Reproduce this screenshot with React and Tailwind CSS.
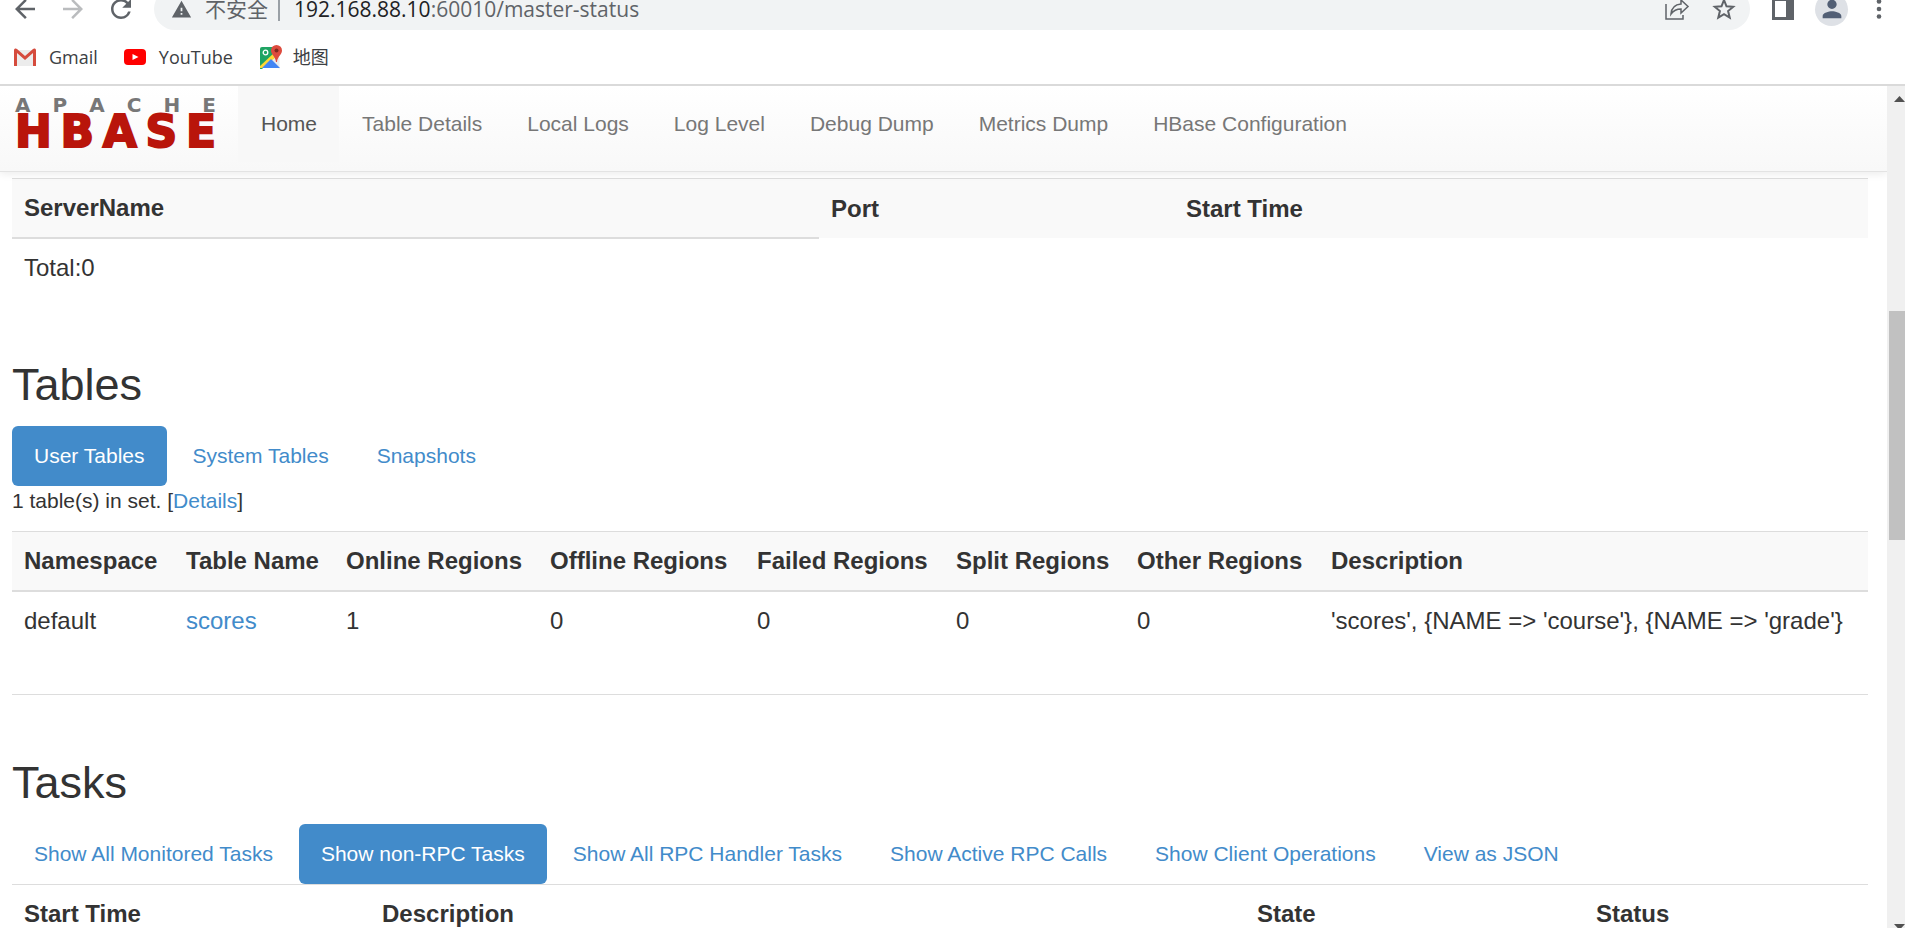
import { MdArrowBack, MdArrowForward, MdPerson, MdRefresh, MdWarning } from "react-icons/md";

const navItems = ["Home", "Table Details", "Local Logs", "Log Level", "Debug Dump", "Metrics Dump", "HBase Configuration"];

const tableColumns = [
  { name: "Namespace", width: "w-[162px]" },
  { name: "Table Name", width: "w-[160px]" },
  { name: "Online Regions", width: "w-[204px]" },
  { name: "Offline Regions", width: "w-[207px]" },
  { name: "Failed Regions", width: "w-[199px]" },
  { name: "Split Regions", width: "w-[181px]" },
  { name: "Other Regions", width: "w-[194px]" },
  { name: "Description", width: "" },
];

const taskTabs = [
  "Show All Monitored Tasks",
  "Show non-RPC Tasks",
  "Show All RPC Handler Tasks",
  "Show Active RPC Calls",
  "Show Client Operations",
  "View as JSON",
];

function BrowserToolbar() {
  return (
    <div className="flex h-[42px] -mt-3 items-center pl-[10px] pr-[15px] text-[#5f6368]">
      <div className="mr-[18px] flex gap-[18px]">
        <button aria-label="Back">
          <MdArrowBack size={30} />
        </button>
        <button aria-label="Forward" disabled className="text-[#babcbe]">
          <MdArrowForward size={30} />
        </button>
        <button aria-label="Reload">
          <MdRefresh size={30} />
        </button>
      </div>

      <div className="flex h-[42px] flex-1 items-center rounded-full bg-[#f1f3f4] pl-[17px] pr-[14px]">
        <MdWarning size={21} className="mr-[13px] shrink-0" />
        <span className="text-[21px] leading-[30px]">不安全</span>
        <span className="mx-[10px] h-6 w-[2px] bg-[#9aa0a6]" />
        <span className="flex-1 pl-1 text-[21px] leading-[30px]">
          <span className="text-[#202124]">192.168.88.10</span>:60010/master-status
        </span>
        <button aria-label="Share this page" className="mr-[22px]">
          <svg width="26" height="26" viewBox="0 0 26 26" fill="none" stroke="currentColor" strokeWidth="1.5">
            <path d="M2 8v15h17v-4" />
            <path d="M7 18c.5-6 4-9.500 10-10V4l7 6.500-7 6.500v-4c-4.500 0-7.500 1.500-10 5z" />
          </svg>
        </button>
        <button aria-label="Bookmark this page">
          <svg width="24" height="24" viewBox="0 0 24 24" fill="none" stroke="currentColor" strokeWidth="2">
            <path d="M12 3l2.500 6.300 6.700.5-5.100 4.300 1.600 6.600L12 17.100l-5.700 3.600 1.600-6.600-5.100-4.300 6.700-.5z" />
          </svg>
        </button>
      </div>

      <button aria-label="Side panel" className="ml-[22px]">
        <svg width="22" height="22" viewBox="0 0 22 22">
          <path fill="currentColor" fillRule="evenodd" d="M0 0h22v22H0zM3 3v16h11V3z" />
        </svg>
      </button>
      <button aria-label="Profile" className="ml-[21px] flex size-[33px] items-center justify-center rounded-full bg-[#dee1e6] text-[#525f75]">
        <MdPerson size={28} />
      </button>
      <button aria-label="Menu" className="ml-[24px]">
        <svg width="18" height="24" viewBox="0 0 18 24" fill="currentColor">
          <circle cx="7" cy="4.500" r="2.300" />
          <circle cx="7" cy="12" r="2.300" />
          <circle cx="7" cy="19.500" r="2.300" />
        </svg>
      </button>
    </div>
  );
}

function BookmarksBar() {
  return (
    <div className="flex h-[54px] items-center pt-px pl-[13px] text-[18px] text-[#3c4043]">
      <a href="#gmail" className="flex items-center">
        <svg width="24" height="22" viewBox="0 0 24 22" className="mr-3">
          <path fill="#ececec" d="M2 3h20v16H2z" />
          <path fill="#d54b3d" d="M1 3c0-1.500 2-2 3-1l8 7 8-7c1-1 3-.5 3 1v16h-3V6l-8 7-8-7v13H1z" />
        </svg>
        Gmail
      </a>
      <a href="#youtube" className="ml-[26px] flex items-center">
        <svg width="22" height="20" viewBox="0 0 22 20" className="mr-[13px]">
          <rect width="22" height="16" y="1" rx="4" fill="#f00" />
          <path fill="#fff" d="M8.500 6l6 3-6 3z" />
        </svg>
        YouTube
      </a>
      <a href="#maps" className="ml-[27px] flex items-center">
        <MapsIcon />
        地图
      </a>
    </div>
  );
}

function MapsIcon() {
  return (
    <svg width="22" height="26" viewBox="0 0 22 26" className="mr-[11px]">
      <path fill="#1fa463" d="M0 4q0-2 2-2h12l4 8L2 24H0z" />
      <path fill="#e8eaed" d="M18 11l1.500 2v11L9 16z" />
      <path fill="#fdd835" d="M0 21L14 8l3 3L3 23H0z" />
      <path fill="#4285f4" d="M2 23l9-9 9 9z" />
      <path fill="#dd4b3e" d="M16.500 0a5.500 5.500 0 0 1 5.500 5.500c0 4-4.500 6-5 11.500h-1c-.5-5.500-5-7.500-5-11.500A5.500 5.500 0 0 1 16.500 0z" />
      <circle cx="16.500" cy="5.500" r="2" fill="#80291f" />
      <circle cx="5.500" cy="7.500" r="2.300" fill="none" stroke="#fff" strokeWidth="1.300" />
    </svg>
  );
}

function Logo() {
  return (
    <a href="#home" aria-label="Apache HBase" className="mt-3 ml-[15px] mr-[22px] block w-[201px] font-['DejaVu_Sans'] font-bold">
      <span className="flex h-[15px] items-center justify-between text-[20px] leading-[15px] text-[#777]">
        {[..."APACHE"].map((letter, i) => <span key={i}>{letter}</span>)}
      </span>
      <span className="mt-[3px] flex h-8 items-center justify-between text-[44px] leading-8 text-[#b9150b] [-webkit-text-stroke:2px_#b9150b]">
        {[..."HBASE"].map((letter, i) => <span key={i}>{letter}</span>)}
      </span>
    </a>
  );
}

function Navbar() {
  return (
    <nav className="relative flex h-[86px] border-b border-[#e3e3e3] bg-linear-to-b from-white to-[#f8f8f8] shadow-[0_2px_8px_rgba(0,0,0,0.08)]">
      <Logo />
      <div className="flex items-start">
        {navItems.map((item) => (
          <a
            key={item}
            href="#nav"
            className={`pt-[23px] pr-[22px] pb-[23px] pl-[23px] text-[21px] leading-[30px] whitespace-nowrap ${
              item === "Home" ? "bg-[#f8f8f8] text-[#555]" : "text-[#777]"
            }`}
          >
            {item}
          </a>
        ))}
      </div>
    </nav>
  );
}

function Pills({ tabs, active }) {
  return (
    <div className="flex gap-1">
      {tabs.map((tab) => (
        <a
          key={tab}
          href="#tab"
          className={`rounded-md px-[22px] py-[15px] text-[21px] leading-[30px] whitespace-nowrap ${
            tab === active ? "bg-[#428bca] text-white" : "text-[#428bca]"
          }`}
        >
          {tab}
        </a>
      ))}
    </div>
  );
}

function Scrollbar() {
  return (
    <div className="flex w-[18px] shrink-0 flex-col items-end justify-between overflow-hidden bg-[#f0f0f0]" aria-hidden="true">
      <svg width="12" height="18" viewBox="0 0 12 18" className="shrink-0">
        <path fill="#505050" d="M1 16l5.500-6 5.500 6z" />
      </svg>
      <div className="mt-[207px] h-[229px] w-4 shrink-0 bg-[#c1c1c1]" />
      <div className="flex-1" />
      <svg width="12" height="5" viewBox="0 0 12 5" className="shrink-0">
        <path fill="#505050" d="M1 1h11l-5.500 6z" />
      </svg>
    </div>
  );
}

export default function App() {
  return (
    <div className="flex h-screen flex-col overflow-hidden bg-white font-['Liberation_Sans',Arial,sans-serif] text-[#333]">
      <header className="shrink-0 border-b-2 border-[#dadada] font-['Open_Sans','Noto_Sans_CJK_SC',sans-serif]">
        <BrowserToolbar />
        <BookmarksBar />
      </header>

      <div className="flex min-h-0 flex-1">
        <div className="min-w-0 flex-1 overflow-hidden">
          <Navbar />

          <main className="pt-[6px] pr-[19px] pl-3">
            <table className="w-full table-fixed text-left text-2xl leading-[34px]">
              <thead>
                <tr className="border-t border-[#ddd] bg-[#f9f9f9]">
                  <th className="w-[807px] p-3">ServerName</th>
                  <th className="w-[355px] p-3">Port</th>
                  <th className="p-3">Start Time</th>
                </tr>
              </thead>
              <tbody>
                <tr>
                  <td className="border-t-2 border-[#ddd] p-3">Total:0</td>
                </tr>
              </tbody>
            </table>

            <section className="mt-[63px]">
              <h2 className="mb-4 text-[45px] leading-[50px]">Tables</h2>
              <Pills tabs={["User Tables", "System Tables", "Snapshots"]} active="User Tables" />
              <p className="mb-[15px] text-[21px] leading-[30px]">
                1 table(s) in set. [<a href="#details" className="text-[#428bca]">Details</a>]
              </p>
              <table className="w-full table-fixed text-left text-2xl leading-[34px]">
                <thead>
                  <tr className="border-t border-b-2 border-[#ddd] bg-[#f9f9f9]">
                    {tableColumns.map((col) => (
                      <th key={col.name} className={`p-3 whitespace-nowrap ${col.width}`}>{col.name}</th>
                    ))}
                  </tr>
                </thead>
                <tbody>
                  <tr>
                    <td className="p-3">default</td>
                    <td className="p-3"><a href="#scores" className="text-[#428bca]">scores</a></td>
                    <td className="p-3">1</td>
                    <td className="p-3">0</td>
                    <td className="p-3">0</td>
                    <td className="p-3">0</td>
                    <td className="p-3">0</td>
                    <td className="p-3 whitespace-nowrap">{"'scores', {NAME => 'course'}, {NAME => 'grade'}"}</td>
                  </tr>
                </tbody>
              </table>
            </section>

            <hr className="mt-11 border-[#ddd]" />

            <section className="mt-[63px]">
              <h2 className="mb-4 text-[45px] leading-[50px]">Tasks</h2>
              <Pills tabs={taskTabs} active="Show non-RPC Tasks" />
              <table className="w-full table-fixed text-left text-2xl leading-[34px]">
                <thead>
                  <tr className="border-t border-[#ddd]">
                    <th className="w-[358px] p-3">Start Time</th>
                    <th className="w-[875px] p-3">Description</th>
                    <th className="w-[339px] p-3">State</th>
                    <th className="p-3">Status</th>
                  </tr>
                </thead>
              </table>
            </section>
          </main>
        </div>
        <Scrollbar />
      </div>
    </div>
  );
}
